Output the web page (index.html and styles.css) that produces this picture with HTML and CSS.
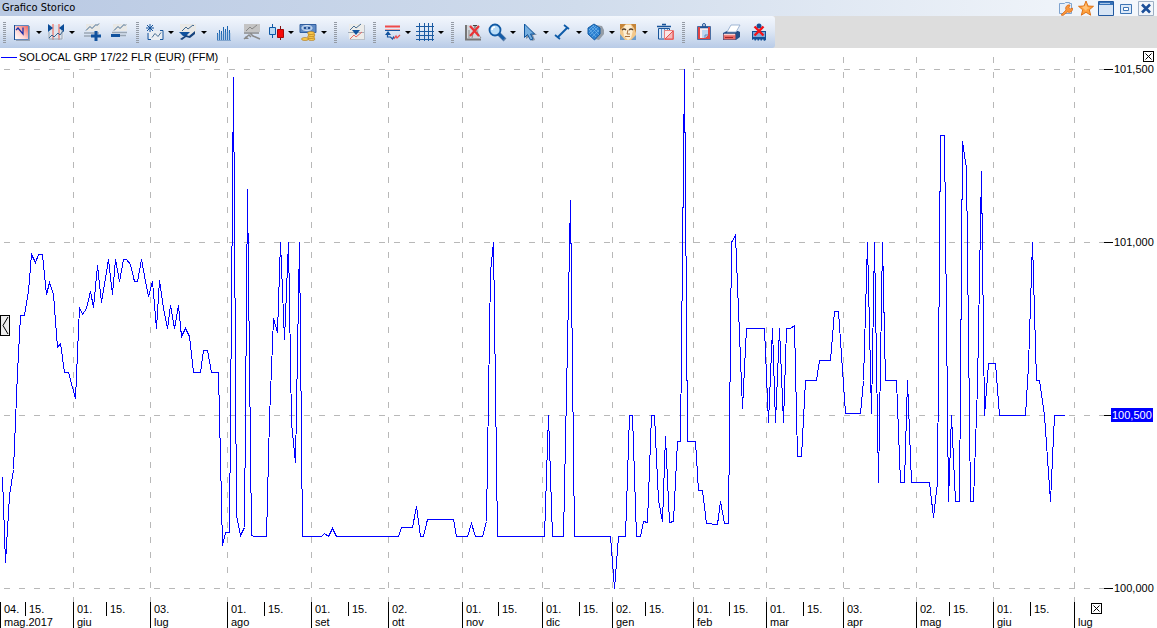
FILE: index.html
```html
<!DOCTYPE html>
<html lang="it">
<head>
    <title>Grafico Storico</title>
    <meta charset="UTF-8">
    <link rel="stylesheet" href="styles.css">
</head>
<body>
    <header class="titlebar">
        <h1 class="title">Grafico Storico</h1>
        <div class="window-buttons">
            <button type="button" class="win" aria-label="Impostazioni">
                <svg viewBox="0 0 16 16"><path d="M1.500 3.500h5l1-1h4v1h2v10h-12z" fill="#e8f0fa" stroke="#7fa3cf"/><path d="M3 15l5-5a3.500 3.500 0 0 1 4-5l-1 2.500 1.500 1.500 2-1a3.500 3.500 0 0 1-5 4L5 15.500z" fill="#f9963c" stroke="#d96410" stroke-width=".7"/></svg>
            </button>
            <button type="button" class="win" aria-label="Preferiti">
                <svg viewBox="0 0 16 16"><path d="M8 1l2 5 5.500.300-4.200 3.500 1.400 5.400L8 12.300 3.300 15.200l1.400-5.400L.5 6.300 6 6z" fill="#ffa13d" stroke="#d96a10" stroke-width=".9"/><path d="M8 3l1 4 3 1-3 1-1 2-2-2-2-2 3-1z" fill="#ffc27a"/></svg>
            </button>
            <button type="button" class="win" aria-label="Finestra">
                <svg viewBox="0 0 16 16"><path d="M.5 1.500h15v14H.5z" fill="#d7e5f5" stroke="#2259a0"/><path d="M1 2h14v3H1z" fill="#3672b8"/><path d="M2 3h10v1H2z" fill="#a9c7e8"/></svg>
            </button>
            <button type="button" class="win" aria-label="Riduci">
                <svg viewBox="0 0 16 16"><path d="M2.500 4.500h11v9h-11z" fill="#dce9f8" stroke="#3d74b4"/><path d="M5.500 7.500h5v3h-5z" fill="#fff" stroke="#3d74b4"/></svg>
            </button>
            <button type="button" class="win" aria-label="Chiudi">
                <svg viewBox="0 0 16 16"><path d="M.5 1.500h15v14H.5z" fill="#f2f6fb" stroke="#9eafc4"/><path d="M4 4.500l8 8M12 4.500l-8 8" stroke="#1b4f99" stroke-width="2.600"/></svg>
            </button>
        </div>
    </header>

    <nav class="toolbar">
        <div class="group">
            <button type="button" class="tool drop" aria-label="Tipo di grafico">
                <svg viewBox="0 0 20 20"><defs><linearGradient id="red" x1="0" y1="1" x2="1" y2="0"><stop offset="0" stop-color="#fff"/><stop offset=".4" stop-color="#ffd9d6"/><stop offset="1" stop-color="#f0605a"/></linearGradient></defs><path d="M3 4h14v15H3z" fill="#97a3b3"/><path d="M1.500 3.500h14v14h-14z" fill="url(#red)" stroke="#5f87bd"/><path d="M1.500 3v15" stroke="#174b92"/><path d="M3 8l2-2 5 6V5.500" fill="none" stroke="#1c2fa8" stroke-width="1.300"/></svg>
            </button>
            <button type="button" class="tool drop" aria-label="Intervallo">
                <svg viewBox="0 0 20 20"><path d="M2 3h16v14H2z" fill="#dce4ee"/><path d="M7 2v16M13 2v16" stroke="#f07a70" stroke-width="1.300"/><path d="M2 2l5 4-5 4zM18 2l-5 4 5 4z" fill="#0a4c98"/><path d="M3 10v7h13V8" fill="none" stroke="#9aa5b2"/><path d="M3 16l3-3 2 2 4-4 2 2 3-4" fill="none" stroke="#3a648f"/></svg>
            </button>
            <button type="button" class="tool" aria-label="Aggiungi indicatore">
                <svg viewBox="0 0 20 20"><path d="M3 2h14v7H3z" fill="#e8e8e6"/><path d="M3 8.500l4-4 2 2 4-4 1 1 2-2" fill="none" stroke="#416991"/><path d="M1 11h15M1 14h8" stroke="#9aa6b4" stroke-width="1.600"/><path d="M13 9v10M8 14h10" stroke="#11529e" stroke-width="3"/></svg>
            </button>
            <button type="button" class="tool" aria-label="Rimuovi indicatore">
                <svg viewBox="0 0 20 20"><path d="M3 2h14v7H3z" fill="#e8e8e6"/><path d="M4 8.500l4-4 2 2 4-4 1 1 1-1" fill="none" stroke="#416991"/><path d="M2 10.500h15M10 13.500h6" stroke="#9aa6b4" stroke-width="1.600"/><path d="M1 12h9v3H1z" fill="#11529e"/></svg>
            </button>
        </div>
        <div class="group">
            <button type="button" class="tool drop" aria-label="Nuova linea">
                <svg viewBox="0 0 20 20"><path d="M4 9h14v9H4z" fill="#e9edf2"/><path d="M15 8.500h3v9h-3M3 11v6.500h3" fill="none" stroke="#16559d"/><path d="M5 2v8M1 6h8M2 3l6 6M8 3L2 9" stroke="#10519c"/><path d="M7 15.500l3-4 3 3 3-4" fill="none" stroke="#496f93"/></svg>
            </button>
            <button type="button" class="tool drop" aria-label="Studio">
                <svg viewBox="0 0 20 20"><path d="M2 2h16v10H2z" fill="#e8e8e6"/><path d="M4 9l4-4 2 2 5-4 1 1" fill="none" stroke="#416991"/><path d="M1 10h11l-4 4H5z" fill="#11529e"/><path d="M2 17l6-4 3 1 6-5v3l-5 4-4-1-4 3z" fill="#16437d"/></svg>
            </button>
            <button type="button" class="tool" aria-label="Volumi">
                <svg viewBox="0 0 20 20"><path d="M2.500 18v-7M4.500 18V8M6.500 18V9M8.500 18V5M10.500 18V7M12.500 18V4M14.500 18V8" stroke="#1a64b0"/><path d="M3 18v-6M5 18v-7M7 18v-6M9 18V9M11 18v-8M13 18V9M15 18v-7" stroke="#6fa2d4" stroke-width=".6"/><path d="M2 18.500h14" stroke="#83a6cf"/></svg>
            </button>
            <button type="button" class="tool" aria-label="Confronto">
                <svg viewBox="0 0 20 20"><path d="M2 2h16v8H2z" fill="#c4c4c4"/><path d="M4 9l4-4 2 2 5-4" fill="none" stroke="#888"/><path d="M2 11h15M8 11l3 3 7 3M2 17l5-4 2 2" fill="none" stroke="#8b8b8b" stroke-width="1.500"/><path d="M2 17h5l-3-3z" fill="#8b8b8b"/></svg>
            </button>
            <button type="button" class="tool drop" aria-label="Candele">
                <svg viewBox="0 0 20 20"><path d="M7.500 2v14" stroke="#0d58a6"/><path d="M4.500 5.500h6v7h-6z" fill="#b9daf4" stroke="#0d58a6"/><path d="M15.500 4v14" stroke="#7b1515"/><path d="M12.500 7.500h6v8h-6z" fill="#f60a0a" stroke="#a70909"/></svg>
            </button>
            <button type="button" class="tool drop" aria-label="Valuta">
                <svg viewBox="0 0 20 20"><path d="M2 2.500h16v8H2z" fill="#5f8ac5" stroke="#315e9f"/><ellipse cx="9" cy="6" rx="5" ry="2.500" fill="#8fb0dc" stroke="#d5e2f3"/><path d="M6 5h2v2H6zM10 5h2v2h-2z" fill="#244f91"/><g fill="#fbc94a" stroke="#a8701a" stroke-width=".6"><ellipse cx="7" cy="17" rx="3.500" ry="1.500"/><ellipse cx="13.500" cy="17" rx="3.500" ry="1.500"/><ellipse cx="13" cy="15" rx="3.500" ry="1.500"/><ellipse cx="13.500" cy="13" rx="3.500" ry="1.500"/><ellipse cx="13" cy="11" rx="3.500" ry="1.500"/></g></svg>
            </button>
        </div>
        <div class="group">
            <button type="button" class="tool" aria-label="Scambia">
                <svg viewBox="0 0 20 20"><path d="M3 3h15v15H3z" fill="#b9c0c9"/><path d="M2 2h15v15H2z" fill="#ececea"/><path d="M3 8l4-4 2 2 5-4" fill="none" stroke="#496f93"/><path d="M1 10.500h16" stroke="#a2abb7"/><path d="M5 8h8l-4 5z" fill="#11529e"/><path d="M3 17l4-4 2 2 6-5" fill="none" stroke="#e86a66"/></svg>
            </button>
        </div>
        <div class="group">
            <button type="button" class="tool drop" aria-label="Linee">
                <svg viewBox="0 0 20 20"><path d="M3 4.500h15" stroke="#ef4a4a" stroke-width="2"/><path d="M3 8.500h15" stroke="#19559f"/><path d="M3 7.500h15" stroke="#f3a09f"/><path d="M3 13l3-4 3 4z" fill="#11529e"/><path d="M5.500 12v3h3l2 2 1-2 1 1" fill="none" stroke="#19559f" stroke-width="1.200"/><path d="M12 17l2-3 1 2 3-3" fill="none" stroke="#ef4a4a" stroke-width="1.200"/></svg>
            </button>
            <button type="button" class="tool drop" aria-label="Griglia">
                <svg viewBox="0 0 20 20"><path d="M4.500 1v18M9.500 1v18M13.500 1v18M17.500 1v18M1 4.500h18M1 9.500h18M1 13.500h18M1 17.500h18" stroke="#1a5aa2"/></svg>
            </button>
        </div>
        <div class="group">
            <button type="button" class="tool" aria-label="Cancella zoom">
                <svg viewBox="0 0 20 20"><path d="M3 3h12v14H3z" fill="#d3d7dc"/><path d="M2 3v14.500h15" fill="none" stroke="#777" stroke-width="2"/><path d="M5 16V8M8 16l3-13 3 9 3 4" fill="none" stroke="#8a8a8a"/><path d="M9 3.500h4" stroke="#444"/><path d="M6 4l9 10M15 4L6 14" stroke="#ea3436" stroke-width="2.200"/></svg>
            </button>
            <button type="button" class="tool drop" aria-label="Zoom">
                <svg viewBox="0 0 20 20"><path d="M12 12l6 6" stroke="#5b7ea9" stroke-width="4"/><path d="M12 12l5 5" stroke="#135ba8" stroke-width="3"/><circle cx="8" cy="8" r="5.500" fill="#b9dcf7" stroke="#1059a4" stroke-width="1.800"/><path d="M5 8a3 3 0 0 1 3-3" fill="none" stroke="#fff" stroke-width="1.500"/></svg>
            </button>
            <button type="button" class="tool drop" aria-label="Puntatore">
                <svg viewBox="0 0 20 20"><path d="M6 4v13l3-2 3 4 3-1-2-5h4z" fill="#8794a5"/><path d="M4.500 2v13.500l3-3 3 5.500 2.500-1-2.500-5h4z" fill="#76afe0" stroke="#0d559f"/></svg>
            </button>
            <button type="button" class="tool drop" aria-label="Segmento">
                <svg viewBox="0 0 20 20"><path d="M4.500 15.500L14.500 5.500" stroke="#0e5ba8" stroke-width="2"/><path d="M2 13l5 4M11 3l5 4" stroke="#0e5ba8" stroke-width="1.800"/></svg>
            </button>
            <button type="button" class="tool drop" aria-label="Forme">
                <svg viewBox="0 0 20 20"><path d="M10 3l6 1 2 4v4l-5 6-4-1z" fill="#959da7"/><path d="M8 2l6 4v6l-5.500 6L2 12V6z" fill="#2b80d0" stroke="#145ca4"/><path d="M3 8l5-5M3 11l7-7M4 13l8-8M6 15l7-7M3 7l7 8M5 5l8 8M7 4l6 6" stroke="#7cbcf0" stroke-width=".6"/></svg>
            </button>
            <button type="button" class="tool drop" aria-label="Figure">
                <svg viewBox="0 0 20 20"><path d="M1 2h16v16H1z" fill="#f3c98c"/><path d="M6 3h6l2 5-2 8-3 2-4-4-1-6z" fill="#fdeed3"/><path d="M1 2h6L3 6l-2 2zM12 2h5v9l-2-5z" fill="#c58438"/><path d="M3 8q2-2 4 0M10 8q2-2 4 0" fill="none" stroke="#59402a" stroke-width="1.300"/><path d="M9 8l-1 4h3M6 14.500h5" fill="none" stroke="#a6703d"/><path d="M1 12l5 6H1zM17 13v5h-5z" fill="#6b9ccc"/></svg>
            </button>
            <button type="button" class="tool" aria-label="Elimina">
                <svg viewBox="0 0 20 20"><path d="M1 4.500h14M6 2.500h4" stroke="#19549a" stroke-width="1.500"/><path d="M2.500 6.500h11V17h-11z" fill="#d7e6f7" stroke="#19549a"/><path d="M5.500 7v9M8.500 7v9M11.500 7v9" stroke="#5f8fc7"/><path d="M8.500 8.500h9v9h-9z" fill="#fbe6e6" stroke="#e98080"/><path d="M9 17l8-8v8z" fill="#f6b9b9" stroke="#e34d4d"/></svg>
            </button>
        </div>
        <div class="group">
            <button type="button" class="tool" aria-label="Appunti">
                <svg viewBox="0 0 20 20"><path d="M2.500 4.500h13v13h-13z" fill="#e04444" stroke="#4a6ea3"/><path d="M5 6h8v7l-3 3H5z" fill="#fbecee"/><path d="M7 8h6v5l-3 3H7z" fill="#bcd6f2"/><path d="M10 16v-3h3" fill="none" stroke="#5d86b8"/><path d="M5 5.500h8M7 4.500h4" stroke="#1f5396" stroke-width="1.600"/><circle cx="9" cy="3" r="1.500" fill="#dfe9f5" stroke="#1f5396"/></svg>
            </button>
            <button type="button" class="tool" aria-label="Stampa">
                <svg viewBox="0 0 20 20"><path d="M1 11l4-2h11l2 1v5l-4 3H1z" fill="#244f88"/><path d="M5 10l4-7h9l-4 7z" fill="#fff" stroke="#8aa5c9" stroke-width=".8"/><path d="M1.500 12h12v5.500h-12z" fill="#ea6a66"/><path d="M2 12.500h11" stroke="#fbd0cd" stroke-width="1.500"/><path d="M3 15.500h8" stroke="#a62727"/></svg>
            </button>
            <button type="button" class="tool" aria-label="Disattiva">
                <svg viewBox="0 0 20 20"><circle cx="10" cy="4" r="2.500" fill="#145096"/><path d="M3 9h14v9l-2 1-1-2-2 2-1-2-2 2-1-2-2 2-1-2-2 1z" fill="#145096"/><path d="M4 10h12v5H4z" fill="#7ea9da"/><path d="M5.500 4.500l9 9M14.500 4.500l-9 9" stroke="#f41318" stroke-width="2.300"/></svg>
            </button>
        </div>
    </nav>

    <main class="chart">
        <svg class="plot" viewBox="0 48 1157 580" role="img" aria-label="SOLOCAL GRP 17/22 FLR (EUR) (FFM)">
            <g id="grid" class="grid"></g>
            <g id="ticks" class="ticks"></g>
            <polyline id="series" class="series"/>
            <rect class="last" x="1111" y="408" width="42" height="14"/>
            <g id="labels" class="labels"></g>
        </svg>
        <div class="legend"><span class="swatch"></span>SOLOCAL GRP 17/22 FLR (EUR) (FFM)</div>
        <button type="button" class="box close-top" aria-label="Chiudi grafico"><svg viewBox="0 0 9 9"><path d="M1.500 1.500l6 6M7.500 1.500l-6 6"/></svg></button>
        <button type="button" class="box close-bottom" aria-label="Chiudi asse"><svg viewBox="0 0 9 9"><path d="M1.500 1.500l6 6M7.500 1.500l-6 6"/></svg></button>
        <button type="button" class="box handle" aria-label="Apri pannello"><svg viewBox="0 0 8 19"><path d="M7 1L2 9.500 7 18"/></svg></button>
    </main>
    <script src="chart.js"></script>
</body>
</html>
```
FILE: styles.css
```css
body {
    margin: 0;
    background-color: #fff;
    color: #000;
    font-family: "Liberation Sans", Arial, sans-serif;
    font-size: 11px;
}

button {
    padding: 0;
    border: none;
    background: none;
    cursor: pointer;
}

svg {
    display: block;
}

/* Title bar */
.titlebar {
    display: flex;
    justify-content: space-between;
    height: 16px;
    background: linear-gradient(to right, #b9c9e3, #d0dcec 50%, #f5f8fc);
}

.title {
    margin: 0;
    padding-left: 2px;
    font-family: "DejaVu Sans Condensed", "Open Sans", sans-serif;
    font-size: 11px;
    font-weight: normal;
    line-height: 15px;
}

.window-buttons {
    display: flex;
    padding-right: 1px;
}

.win {
    display: flex;
    justify-content: center;
    width: 20px;
}

.win svg {
    width: 16px;
    height: 16px;
}

/* Toolbar */
.toolbar {
    display: flex;
    height: 32px;
    background-color: #ddd;
}

.group {
    position: relative;
    display: flex;
    align-items: center;
    padding-left: 12px;
    background: linear-gradient(#f3f7fd, #dfe8f5 45%, #b8cbe7);
}

.group:first-child {
    padding-left: 13px;
}

.group:last-child {
    padding-right: 3px;
    border-radius: 0 3px 3px 0;
}

/* Dotted grip on the left of each group */
.group::before {
    content: "";
    position: absolute;
    left: 3px;
    top: 6px;
    width: 3px;
    height: 21px;
    background: repeating-linear-gradient(#949ba5 0 1px, transparent 1px 2px);
}

.tool {
    display: flex;
    align-items: center;
    justify-content: center;
    width: 27px;
    height: 28px;
}

.tool svg {
    width: 20px;
    height: 20px;
}

.drop {
    justify-content: flex-start;
    width: 33px;
}

.drop::after {
    content: "";
    margin-left: 3px;
    border: 3px solid transparent;
    border-top-color: #000;
    border-bottom: none;
}

/* Chart */
.chart {
    position: relative;
}

.plot {
    width: 100%;
    height: auto;
}

.grid {
    stroke: #b8b8b8;
    stroke-dasharray: 6 9;
    shape-rendering: crispEdges;
}

.ticks {
    stroke: #000;
    shape-rendering: crispEdges;
}

.series {
    fill: none;
    stroke: #00f;
    shape-rendering: crispEdges;
}

.last {
    fill: #00f;
}

.labels .current {
    fill: #fff;
}

.legend {
    position: absolute;
    left: 0;
    top: 0;
    display: flex;
    align-items: center;
    gap: 2px;
    width: 222px;
    height: 18px;
    background-color: #fff;
}

.swatch {
    width: 16px;
    margin-left: 1px;
    border-top: 1px solid #00f;
}

.box {
    position: absolute;
    width: 11px;
    height: 11px;
    border: 1px solid #000;
    background-color: #fff;
}

.box svg {
    width: 100%;
    height: 100%;
}

.box path {
    fill: none;
    stroke: #000;
}

.close-top {
    right: 3px;
    top: 3px;
}

.close-bottom {
    right: 55px;
    bottom: 14px;
}

.handle {
    left: 0;
    top: 46%;
    width: 10px;
    height: 21px;
    background-color: #eee;
}
```
FILE: chart.js
```javascript
var prices = [[69, "101,500"], [242, "101,000"], [415, "100,500"], [588, "100,000"]];

// x, day, month
var months = [
    [0, "04.", "mag.2017"], [73, "01.", "giu"], [150, "03.", "lug"], [227, "01.", "ago"],
    [311, "01.", "set"], [388, "02.", "ott"], [462, "01.", "nov"], [542, "01.", "dic"],
    [612, "02.", "gen"], [693, "01.", "feb"], [766, "01.", "mar"], [843, "03.", "apr"],
    [916, "02.", "mag"], [993, "01.", "giu"], [1074, "", "lug"]
];
var middles = [25, 106, 264, 348, 498, 579, 645, 729, 803, 949, 1030];

var points = "2,477 5,562 9,495 13,469 17,372 20,315 24,315 28,291 31,254 35,262 38,254 42,254 " +
    "46,294 49,282 53,294 57,347 60,343 64,372 68,372 75,398 79,307 82,314 86,308 90,291 93,307 " +
    "97,265 101,302 108,259 112,294 115,259 119,281 123,259 126,259 130,264 134,281 137,281 141,259 " +
    "145,281 148,296 152,281 156,328 159,280 163,308 167,328 170,305 174,328 178,305 181,336 185,328 " +
    "189,336 193,372 200,372 203,350 207,350 211,372 218,372 222,545 225,532 229,532 233,77 236,515 " +
    "240,535 244,527 247,189 251,535 254,536 266,536 269,418 273,318 277,332 280,242 284,339 288,242 " +
    "291,422 295,462 299,242 302,536 321,536 324,533 328,536 332,528 336,536 398,536 401,527 412,527 " +
    "416,506 420,536 423,536 427,519 453,519 456,536 467,536 471,523 475,536 482,536 486,521 490,272 " +
    "493,242 497,536 544,536 548,415 552,536 563,536 570,200 574,536 610,536 614,588 618,536 625,536 " +
    "629,415 632,415 636,536 640,536 643,521 647,522 651,415 654,415 658,500 662,521 665,436 669,522 " +
    "673,521 677,441 680,441 684,69 687,441 695,441 698,490 702,490 706,523 711,523 712,524 717,524 " +
    "720,501 724,523 728,523 731,242 735,235 742,408 746,328 764,328 768,422 772,328 775,422 779,328 " +
    "783,422 786,328 790,328 794,325 797,456 801,456 805,380 816,380 819,360 830,360 834,311 838,311 " +
    "845,413 860,413 863,380 867,242 871,413 874,242 878,482 882,242 885,380 896,380 900,482 904,482 " +
    "907,380 911,482 929,482 933,517 937,482 940,135 944,135 948,501 951,415 955,501 959,501 962,141 " +
    "966,168 970,501 973,501 977,385 981,171 984,415 988,363 995,363 999,415 1025,415 1028,365 " +
    "1032,242 1036,380 1039,380 1044,415 1050,501 1054,415 1064,415";

function add(parent, name, attrs, text) {
    var el = document.createElementNS("http://www.w3.org/2000/svg", name);
    for (var key in attrs) {
        el.setAttribute(key, attrs[key]);
    }
    if (text) {
        el.textContent = text;
    }
    document.getElementById(parent).appendChild(el);
}

// lines sit in the middle of a pixel so they stay sharp
function line(parent, x1, y1, x2, y2) {
    var dx = x1 === x2 ? 0.5 : 0;
    var dy = y1 === y2 ? 0.5 : 0;
    add(parent, "line", { x1: x1 + dx, y1: y1 + dy, x2: x2 + dx, y2: y2 + dy });
}

prices.forEach(function(p) {
    var current = p[1] === "100,500";
    line("grid", -11, p[0], 1104, p[0]);
    line("ticks", 1104, p[0], current ? 1111 : 1113, p[0]);
    add("labels", "text", { x: current ? 1112 : 1114, y: p[0] + 4, "class": current ? "current" : "" }, p[1]);
});

months.forEach(function(m) {
    if (m[0] > 0) {
        line("grid", m[0], 42, m[0], 602);
    }
    line("ticks", m[0], 602, m[0], 628);
    add("labels", "text", { x: m[0] + 4, y: 613 }, m[1]);
    add("labels", "text", { x: m[0] + 4, y: 626 }, m[2]);
});

middles.forEach(function(x) {
    line("ticks", x, 602, x, 616);
    add("labels", "text", { x: x + 4, y: 613 }, "15.");
});

var series = document.getElementById("series");
series.setAttribute("points", points);
series.setAttribute("transform", "translate(0.5 0.5)");
```
